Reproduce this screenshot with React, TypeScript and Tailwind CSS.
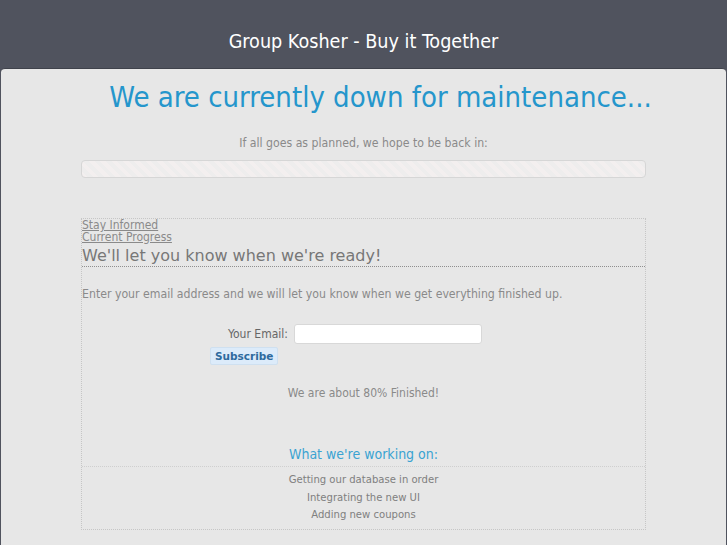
const condensed = { fontFamily: '"DejaVu Sans Condensed", "DejaVu Sans", sans-serif' };
const regular = { fontFamily: '"DejaVu Sans", sans-serif' };

const working = ['Getting our database in order', 'Integrating the new UI', 'Adding new coupons'];

const App = () => {
  return (
    <div className="w-[727px] h-[545px] overflow-hidden bg-[#50535e] flex flex-col" style={condensed}>
      <header className="h-[68px] shrink-0 flex items-center justify-center pt-[16px]">
        <h1 className="text-[19.6px] text-white">Group Kosher - Buy it Together</h1>
      </header>
      <main className="flex-1 mx-[1px] bg-[#e7e7e7] rounded-t-[4px] border-t border-[#3f424b] flex flex-col">
        <h2 className="text-[29px] text-[#2596cc] text-center pl-[34px] mt-[9px] leading-[38px]">
          We are currently down for maintenance...
        </h2>
        <p className="text-[12.2px] leading-[18px] text-[#8a8a8a] text-center mt-[18px]">
          If all goes as planned, we hope to be back in:
        </p>
        <div className="mx-[80px] mt-[8px] h-[18px] shrink-0 rounded-[4px] border border-[#d6d6d6] bg-[repeating-linear-gradient(45deg,#f3efef_0px,#f3efef_4px,#eeeded_4px,#eeeded_8px)]" />
        <section className="mx-[80px] mt-[40px] border border-dotted border-[#c6c6c6] flex flex-col">
          <a className="text-[12px] leading-[12px] text-[#8a8a8a] underline w-fit">Stay Informed</a>
          <a className="text-[12px] leading-[12px] text-[#8a8a8a] underline w-fit">Current Progress</a>
          <h3 className="text-[16px] text-[#777] border-b border-dotted border-[#8f8f8f] leading-[20px] pt-[3px]" style={regular}>
            We'll let you know when we're ready!
          </h3>
          <p className="text-[12.2px] leading-[18px] text-[#8a8a8a] mt-[18px]">
            Enter your email address and we will let you know when we get everything finished up.
          </p>
          <div className="flex items-center mt-[21px] pl-[146px] gap-[6px]">
            <label className="text-[12px] text-[#666]">Your Email:</label>
            <input className="w-[188px] h-[20px] bg-white rounded-[3px] border border-[#d8d8d8]" />
          </div>
          <button
            className="self-start ml-[128px] mt-[3px] h-[18px] px-[4px] bg-[#dcebfa] border border-[#cfe0f0] rounded-[2px] text-[10.5px] leading-[16px] font-bold text-[#2e6a9e]"
            style={regular}>
            Subscribe
          </button>
          <p className="text-[12px] leading-[18px] text-[#8a8a8a] text-center mt-[19px]">We are about 80% Finished!</p>
          <h4 className="text-[14px] leading-[20px] text-[#3aa3d2] text-center mt-[42px] pb-[2px] border-b border-dotted border-[#cfcfcf]">
            What we're working on:
          </h4>
          <ul className="text-[11.2px] text-[#808080] text-center pt-[4px] pb-[5px]">
            {working.map((item) => (
              <li key={item} className="leading-[17.5px]">{item}</li>
            ))}
          </ul>
        </section>
      </main>
    </div>
  );
};

export default App;
